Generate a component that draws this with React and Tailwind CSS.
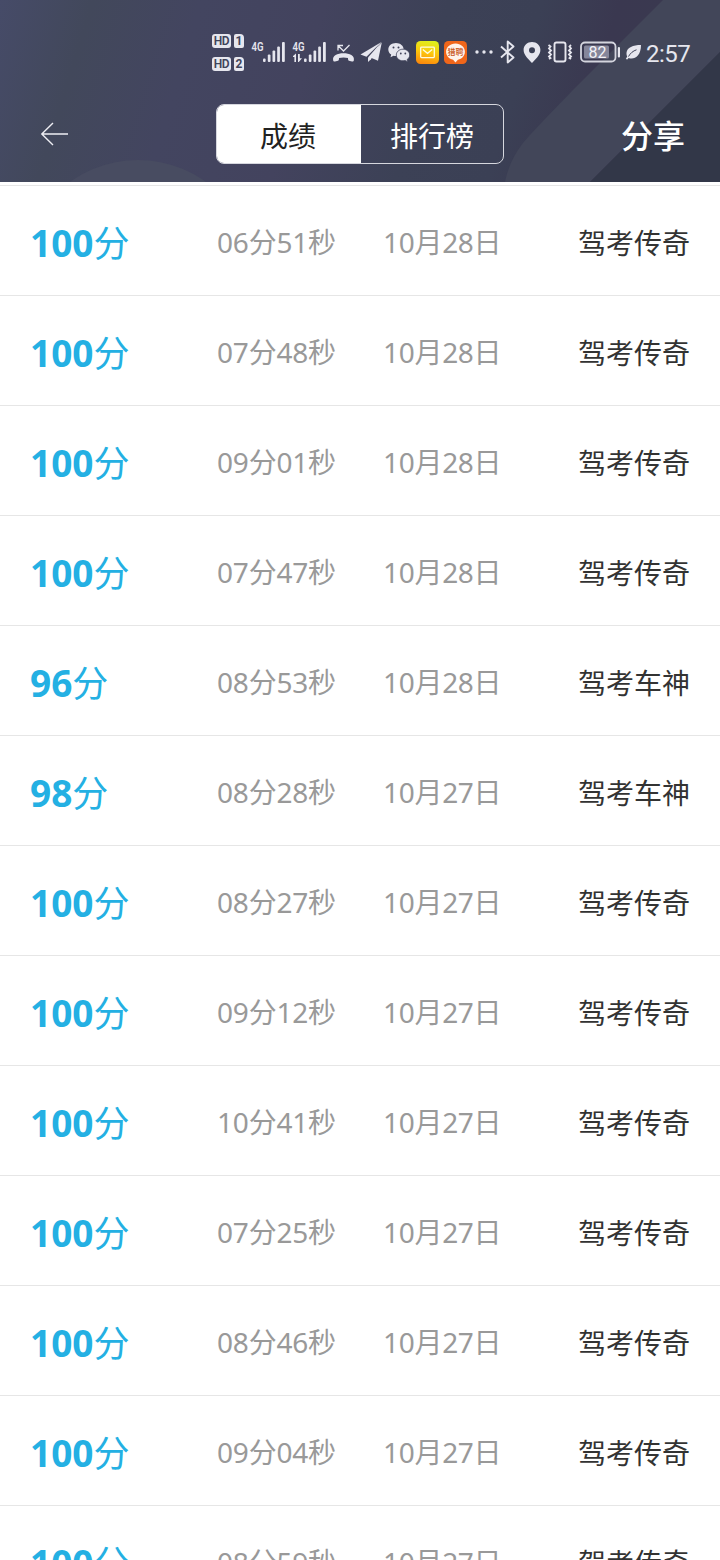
import React from "react";

const rows = [
  ["100", "06分51秒", "10月28日", "驾考传奇"],
  ["100", "07分48秒", "10月28日", "驾考传奇"],
  ["100", "09分01秒", "10月28日", "驾考传奇"],
  ["100", "07分47秒", "10月28日", "驾考传奇"],
  ["96", "08分53秒", "10月28日", "驾考车神"],
  ["98", "08分28秒", "10月27日", "驾考车神"],
  ["100", "08分27秒", "10月27日", "驾考传奇"],
  ["100", "09分12秒", "10月27日", "驾考传奇"],
  ["100", "10分41秒", "10月27日", "驾考传奇"],
  ["100", "07分25秒", "10月27日", "驾考传奇"],
  ["100", "08分46秒", "10月27日", "驾考传奇"],
  ["100", "09分04秒", "10月27日", "驾考传奇"],
  ["100", "08分59秒", "10月27日", "驾考传奇"],
];

function HdBadge({ n }) {
  return (
    <div className="flex gap-[3px] font-['Roboto',sans-serif] text-[12px] font-bold leading-[13px] text-[#40435a]">
      <span className="flex h-[14px] w-[19px] items-center justify-center rounded-[3px] bg-[#e6e6ee] font-semibold tracking-[-0.3px]">HD</span>
      <span className="flex h-[14px] w-[10px] items-center justify-center rounded-[2px] rounded-tr-[4px] bg-[#e6e6ee]">{n}</span>
    </div>
  );
}

function Signal({ data }) {
  return (
    <svg className="overflow-visible" width="36" height="24" viewBox="0 0 36 24" fill="#e6e6ee">
      <text x="0.5" y="11" fontSize="13.500" fontWeight="600" fontFamily="Roboto, sans-serif" textLength="12" lengthAdjust="spacingAndGlyphs">4G</text>
      {data && <path d="M1 16 4 13.500V22H2.400V17H1zM6 14h1.800v4.200H10L6.800 22H6z" />}
      <rect x="12" y="18.500" width="2.600" height="3.500" rx="1" />
      <rect x="16.800" y="14.500" width="2.700" height="7.500" rx="1" />
      <rect x="21.500" y="10.500" width="2.700" height="11.500" rx="1" />
      <rect x="26.200" y="6.500" width="2.700" height="15.500" rx="1" />
      <rect x="31" y="2" width="2.800" height="20" rx="1" />
    </svg>
  );
}

function StatusBar() {
  return (
    <div className="flex h-[104px] pl-[212px] text-[#e6e6ee]">
      <div className="mt-[34px] flex w-[33px] flex-col gap-[9px]">
        <HdBadge n="1" />
        <HdBadge n="2" />
      </div>
      <div className="mt-10 flex h-6 items-center">
        <div className="ml-[6px]"><Signal /></div>
        <div className="ml-[5px]"><Signal data /></div>
        {/* missed call */}
        <svg className="ml-[3px]" width="24" height="24" viewBox="0 0 24 24" fill="none">
          <path d="M7 10.500V5.500H12M7.500 6l5 5L18.500 5" stroke="#e6e6ee" strokeWidth="1.300" />
          <path d="M2.200 20.500C1 15.500 6.500 13.200 12.500 13.200S24 15.500 22.800 20.500c-.2 1-1 1.200-1.800 1l-3-.8c-.8-.3-1.100-1-1-2.700-2.800-.8-6.200-.8-9 0 .1 1.700-.2 2.400-1 2.700l-3 .8c-.9.2-1.600 0-1.800-1z" fill="#e6e6ee" />
        </svg>
        {/* paper plane */}
        <svg className="ml-[5px]" width="22" height="24" viewBox="0 0 22 24" fill="#e6e6ee">
          <path d="M21.500 2 .5 14.500l6 2.300z" />
          <path d="M21.500 2 8 17.500V22l3-2.800z" />
          <path d="M21.800 2.500 9.800 17.200l8.200 3.500z" />
        </svg>
        {/* chat bubbles */}
        <svg className="ml-[6px]" width="22" height="24" viewBox="0 0 22 24">
          <path d="M8 3C3.600 3 .3 5.800.3 9.500c0 2.200 1.200 4 2.900 5.100L2.500 17.200l3-1.500c.8.200 1.600.3 2.500.3 4.300 0 7.700-2.900 7.700-6.500S12.300 3 8 3z" fill="#e6e6ee" />
          <path d="M15 9.200c-3.800 0-6.700 2.600-6.700 5.800s2.900 5.800 6.700 5.800c.8 0 1.500-.1 2.200-.3l2.500 1.400-.6-2.300c1.500-1.100 2.600-2.700 2.600-4.600 0-3.200-3-5.800-6.700-5.800z" fill="#e6e6ee" stroke="#40425a" strokeWidth=".8" />
          <circle cx="5.500" cy="7.500" r="1" fill="#40425a" /><circle cx="10.500" cy="7.500" r="1" fill="#40425a" />
          <circle cx="12.800" cy="13.500" r=".9" fill="#40425a" /><circle cx="17.300" cy="13.500" r=".9" fill="#40425a" />
        </svg>
        {/* mail app */}
        <svg className="ml-[6px]" width="23" height="23" viewBox="0 0 23 23">
          <defs>
            <linearGradient id="mail" x1="0.6" y1="0" x2="0.4" y2="1">
              <stop offset="0" stopColor="#dff01c" /><stop offset=".5" stopColor="#fdc70c" /><stop offset="1" stopColor="#fb8a0c" />
            </linearGradient>
          </defs>
          <rect width="23" height="23" rx="4.500" fill="url(#mail)" />
          <rect x="4.700" y="6.200" width="13.600" height="10.400" rx=".8" fill="none" stroke="#fffbe0" strokeWidth="1.300" />
          <path d="m6.800 8.500 4.700 3.800 4.700-3.800" fill="none" stroke="#fffbe0" strokeWidth="1.300" />
        </svg>
        {/* recruiting app */}
        <svg className="ml-[5px]" width="23" height="23" viewBox="0 0 23 23">
          <rect width="23" height="23" rx="4.500" fill="#f0661a" />
          <path d="M11.500 2.500c-5.300 0-9.400 3.600-9.400 8.300 0 4 2.900 7.200 7 8l2.400 2.700 2.400-2.700c4.100-.8 7-4 7-8 0-4.700-4.100-8.300-9.400-8.300z" fill="#fff3ea" />
          <text x="3.500" y="14" fontSize="8" fontWeight="500" fill="#c8581c" fontFamily="Noto Sans CJK SC, sans-serif" textLength="16">猎聘</text>
        </svg>
        <svg className="ml-[8px]" width="18" height="24" viewBox="0 0 18 24" fill="#e6e6ee">
          <circle cx="2" cy="12" r="1.700" /><circle cx="9" cy="12" r="1.700" /><circle cx="16" cy="12" r="1.700" />
        </svg>
        <svg className="ml-[7px]" width="16" height="24" viewBox="0 0 16 24" fill="none" stroke="#e6e6ee" strokeWidth="1.900" strokeLinejoin="round">
          <path d="M1 6.500 13.500 17.500 7.700 22.500V1.500L13.500 6.500 1 17.500" />
        </svg>
        <svg className="ml-[7px]" width="18" height="24" viewBox="0 0 18 24" fill="#e6e6ee">
          <path fillRule="evenodd" d="M9 2C4.300 2 .6 5.500.6 10c0 5.500 5.400 9.500 8.400 13 3-3.500 8.400-7.500 8.400-13C17.400 5.500 13.700 2 9 2zm0 5.200a3 3 0 1 1 0 6 3 3 0 0 1 0-6z" />
        </svg>
        {/* vibrate */}
        <svg className="ml-[6px]" width="26" height="24" viewBox="0 0 26 24" fill="none" stroke="#e6e6ee">
          <rect x="7.500" y="2.500" width="11" height="19" rx="2" strokeWidth="1.900" />
          <path d="m1.500 5 2 1.500-1.500 2 2 2-2 2 2 2-2 2 1.500 1.500-1.500 1M24 5l-1.500 1.500 1.500 2-2 2 2 2-2 2 2 2-1.500 1.500 1.500 1" strokeWidth="1.800" />
        </svg>
        {/* battery */}
        <svg className="ml-[7px]" width="41" height="24" viewBox="0 0 41 24">
          <rect x="1" y="2.500" width="34.500" height="19" rx="4" fill="none" stroke="#d4d5de" strokeWidth="1.800" />
          <rect x="4" y="5.500" width="25" height="13" rx="1.500" fill="#85869a" />
          <rect x="37.800" y="7" width="2.200" height="10.500" rx="1" fill="#e6e6ee" />
          <text x="8.500" y="17.500" fontSize="16" fill="#f2f2f7" fontFamily="Roboto, sans-serif" fontWeight="400" textLength="18" lengthAdjust="spacingAndGlyphs">82</text>
        </svg>
        {/* leaf */}
        <svg className="ml-[4px]" width="17" height="24" viewBox="0 0 17 24">
          <path d="M16 5C8 5 2 7.500 1.500 12.800c-.1 1.600.2 2.800.7 3.700L.8 19l1.500.4L3.600 18c5.600 2 12.400-1.700 12.400-13z" fill="#e6e6ee" />
          <path d="M3.500 16.500C5.500 13 8 11 11.500 9.800" stroke="#41445a" strokeWidth="1" fill="none" />
        </svg>
        <span className="ml-[4px] mt-[3px] whitespace-nowrap font-['Roboto',sans-serif] text-[24px] leading-6 tracking-[-0.5px]">2:57</span>
      </div>
    </div>
  );
}

function Header() {
  return (
    <header className="relative h-[182px] w-[720px] overflow-hidden bg-[linear-gradient(107deg,#464b68_0%,#42485b_12%,#434560_26%,#43435e_42%,#3c4156_58%,#3b4055_70%,#3a3850_80%,#3a3b50_100%)]">
      <svg className="absolute inset-0" width="720" height="182" viewBox="0 0 720 182">
        <circle cx="138" cy="276" r="116" fill="#484c61" />
        <path d="M663 0H720V52L590 182H505Q509 161 523 143Q532 132 573 90Z" fill="#424659" />
        <path d="M720 52V182H590Z" fill="#323748" />
      </svg>
      <div className="relative">
        <StatusBar />
        <div className="flex h-[60px] items-center text-white">
          <svg className="ml-10" width="29" height="24" viewBox="0 0 29 24" fill="none" stroke="#eeeef3" strokeWidth="1.400">
            <path d="M13 1 1.800 12 13 23M1.800 12H28" />
          </svg>
          <div className="ml-[147px] flex h-[60px] w-[288px] overflow-hidden rounded-lg border border-[#d6d7de] text-[28px]">
            <div className="flex w-[144px] items-center justify-center bg-white pr-[2px] pt-[3px] text-[#222]">成绩</div>
            <div className="flex flex-1 items-center justify-center pt-[3px]">排行榜</div>
          </div>
          <div className="ml-[117px] pt-[3px] text-[32px] font-medium leading-[60px]">分享</div>
        </div>
      </div>
    </header>
  );
}

export default function App() {
  return (
    <div className="h-[1560px] w-[720px] overflow-hidden bg-white font-['Noto_Sans','Noto_Sans_CJK_SC',sans-serif]">
      <Header />
      <div className="mt-[3px] border-t border-[#e6e6e6]">
        {rows.map(([score, time, date, rank], i) => (
          <div key={i} className="flex h-[110px] items-center whitespace-nowrap border-b border-[#e6e6e6] pt-[3px] text-[28px] leading-10 text-[#999]">
            <div className="w-[217px] pl-[30px] pt-[3px] text-[36px] text-[#24b0e3]">
              <span className="text-[37px] font-bold">{score}</span>分
            </div>
            <div className="w-[166px] tracking-[-0.2px]">{time}</div>
            <div className="w-[195px] tracking-[-0.3px]">{date}</div>
            <div className="pt-[1px] text-[#333]">{rank}</div>
          </div>
        ))}
      </div>
    </div>
  );
}
